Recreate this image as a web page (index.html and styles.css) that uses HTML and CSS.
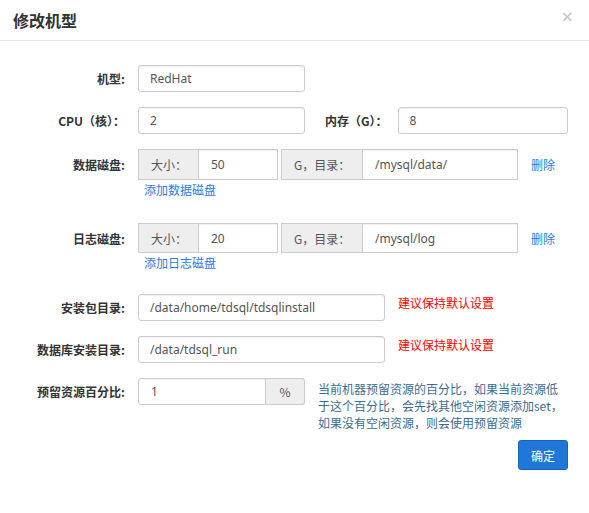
FILE: index.html
```html
<!DOCTYPE html>
<html lang="zh-CN">
<head>
<meta charset="utf-8">
<title>修改机型</title>
<link rel="stylesheet" href="styles.css">
</head>
<body>
<div class="modal">
  <div class="modal-header">
    <h4 class="modal-title">修改机型</h4>
    <span class="close">×</span>
  </div>
  <div class="modal-body">
    <div class="row r-model">
      <label class="label">机型:</label>
      <input class="input w167" value="RedHat">
    </div>
    <div class="row r-cpu">
      <label class="label">CPU（核）：</label>
      <input class="input w167" value="2">
      <label class="label-inline">内存（G）：</label>
      <input class="input w170" value="8">
    </div>
    <div class="row r-disk">
      <label class="label">数据磁盘:</label>
      <div class="group">
        <span class="addon a-size">大小：</span>
        <input class="ginput gi-size" value="50">
      </div>
      <div class="group g2">
        <span class="addon a-dir">G，目录：</span>
        <input class="ginput gi-dir" value="/mysql/data/">
      </div>
      <a class="link del">删除</a>
    </div>
    <div class="add-line"><a class="link">添加数据磁盘</a></div>
    <div class="row r-disk r-log">
      <label class="label">日志磁盘:</label>
      <div class="group">
        <span class="addon a-size">大小：</span>
        <input class="ginput gi-size" value="20">
      </div>
      <div class="group g2">
        <span class="addon a-dir">G，目录：</span>
        <input class="ginput gi-dir" value="/mysql/log">
      </div>
      <a class="link del">删除</a>
    </div>
    <div class="add-line add-log"><a class="link">添加日志磁盘</a></div>
    <div class="row r-path">
      <label class="label label-top">安装包目录:</label>
      <input class="input w247" value="/data/home/tdsql/tdsqlinstall">
      <span class="warn">建议保持默认设置</span>
    </div>
    <div class="row r-path">
      <label class="label label-top">数据库安装目录:</label>
      <input class="input w247" value="/data/tdsql_run">
      <span class="warn">建议保持默认设置</span>
    </div>
    <div class="row r-pct">
      <label class="label label-top">预留资源百分比:</label>
      <div class="group gp">
        <input class="ginput gi-pct" value="1">
        <span class="addon a-pct">%</span>
      </div>
      <p class="help">当前机器预留资源的百分比，如果当前资源低于这个百分比，会先找其他空闲资源添加set，如果没有空闲资源，则会使用预留资源</p>
    </div>
    <div class="footer">
      <button class="btn">确定</button>
    </div>
  </div>
</div>
</body>
</html>
```

FILE: styles.css
```css
* { box-sizing: border-box; }
html, body { margin: 0; padding: 0; background: #fff; }
body {
  font-family: "Noto Sans", "Noto Sans CJK SC", sans-serif;
  font-size: 12px;
  color: #333;
}
.modal { width: 589px; }
.modal-header {
  height: 41px;
  border-bottom: 1px solid #e5e5e5;
  display: flex;
  align-items: center;
  justify-content: space-between;
  padding: 0 16px 0 13px;
}
.modal-title {
  margin: 0;
  font-size: 16px;
  font-weight: bold;
  color: #333;
  line-height: 22px;
  font-family: "Noto Sans CJK SC", sans-serif;
}
.close {
  font-size: 20px;
  color: #c4c4c4;
  line-height: 1;
  margin-top: -6px;
}
.modal-body { padding-top: 24px; }
.row { display: flex; align-items: center; }
.label {
  width: 125px;
  margin-right: 13px;
  text-align: right;
  font-weight: bold;
  color: #333;
  font-family: "Noto Sans CJK SC", sans-serif;
  font-size: 12px;
}
.label-top { line-height: 27px; }
.label-inline {
  margin-left: 20px;
  margin-right: 10px;
  font-weight: bold;
  color: #333;
  font-family: "Noto Sans CJK SC", sans-serif;
}
.input {
  height: 27px;
  border: 1px solid #ccc;
  border-radius: 3px;
  padding: 0 11px;
  font: inherit;
  color: #555;
  box-shadow: inset 0 1px 1px rgba(0,0,0,.06);
  outline: none;
}
.w167 { width: 167px; }
.w170 { width: 170px; }
.w247 { width: 247px; }
.r-model { margin-bottom: 15px; }
.r-cpu { margin-bottom: 15px; }
.r-disk { height: 31px; }
.r-log { height: 30px; }
.group { display: flex; height: 100%; }
.g2 { margin-left: 3px; }
.addon {
  display: flex;
  align-items: center;
  background: #eee;
  border: 1px solid #ccc;
  padding: 0 12px;
  color: #555;
  font-family: "Noto Sans CJK SC", sans-serif;
  white-space: nowrap;
}
.ginput {
  height: 100%;
  border: 1px solid #ccc;
  border-left: none;
  padding: 0 12px;
  font: inherit;
  color: #555;
  outline: none;
  box-shadow: inset 0 1px 1px rgba(0,0,0,.06);
}
.a-size { width: 61px; }
.gi-size { width: 79px; }
.a-dir { width: 82px; }
.gi-dir { width: 155px; }
.del { margin-left: 13px; }
.link {
  color: #2a7ce0;
  text-decoration: none;
  font-family: "Noto Sans CJK SC", sans-serif;
  cursor: pointer;
}
.add-line {
  margin: 3px 0 25px 144px;
  line-height: 14px;
}
.add-log { margin-top: 3px; margin-bottom: 23px; }
.r-path { align-items: flex-start; margin-bottom: 15px; }
.warn {
  color: #f00;
  margin-left: 13px;
  line-height: 17px;
  font-family: "Noto Sans CJK SC", sans-serif;
}
.r-pct { align-items: flex-start; }
.gp { height: 27px; }
.gi-pct {
  width: 128px;
  border-left: 1px solid #ccc;
  border-radius: 3px 0 0 3px;
}
.a-pct {
  width: 39px;
  border-left: none;
  border-radius: 0 3px 3px 0;
  justify-content: center;
  padding: 0;
}
.help {
  margin: 2px 0 0 13px;
  width: 250px;
  line-height: 17px;
  color: #3d6d8e;
  font-family: "Noto Sans CJK SC", sans-serif;
}
.footer {
  display: flex;
  justify-content: flex-end;
  padding-right: 21px;
  margin-top: 9px;
}
.btn {
  width: 50px;
  height: 30px;
  background: #1f78d8;
  border: 1px solid #1b62b5;
  border-radius: 3px;
  color: #fff;
  font-family: "Noto Sans CJK SC", sans-serif;
  font-size: 12px;
  padding: 0;
}
```
